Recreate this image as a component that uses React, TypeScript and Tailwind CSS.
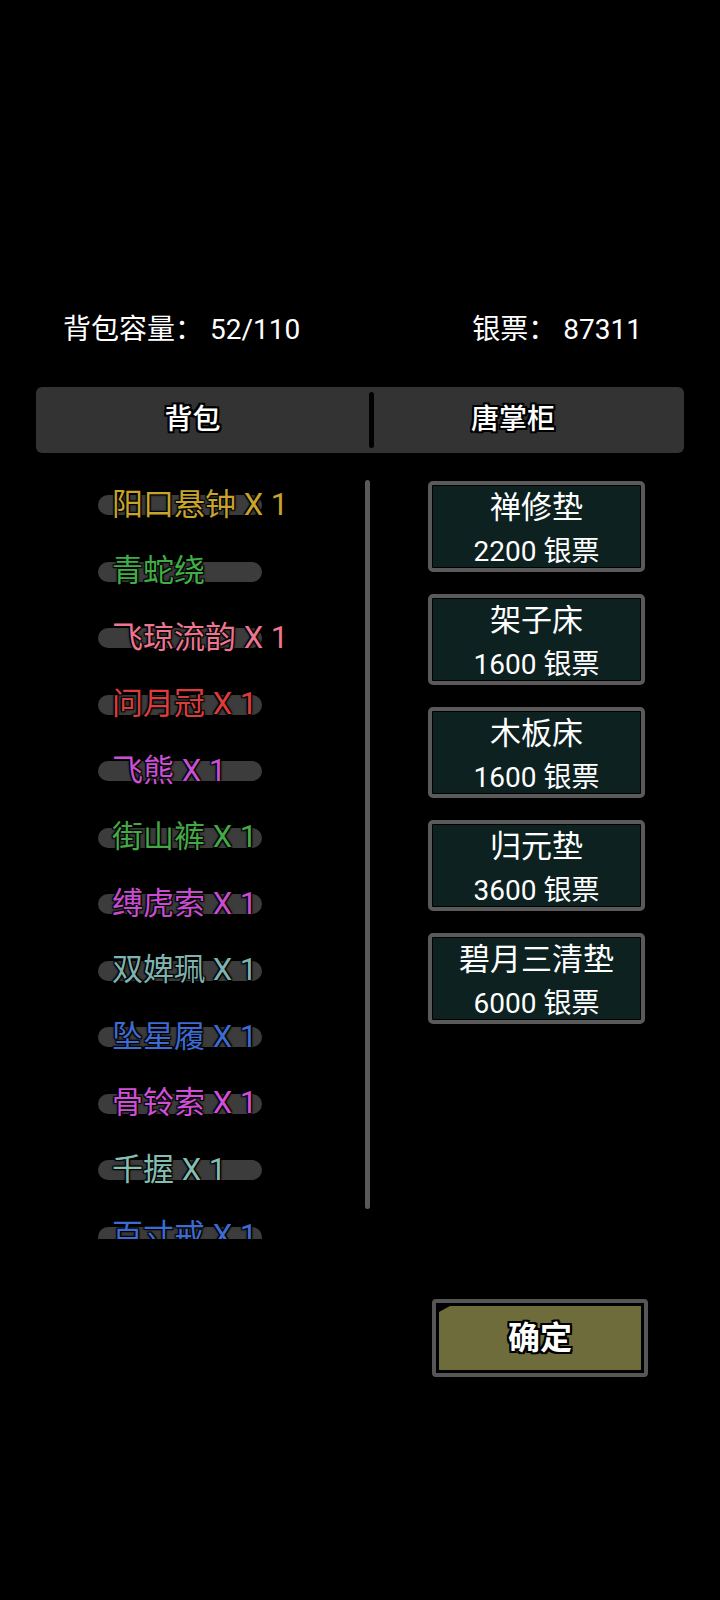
import React from "react";

const outline =
  "[text-shadow:-1px_-1px_1px_#000,1px_-1px_1px_#000,-1px_1px_1px_#000,1px_1px_1px_#000,0_0_3px_#000]";
const thickOutline =
  "[text-shadow:-2px_-2px_0_#000,2px_-2px_0_#000,-2px_2px_0_#000,2px_2px_0_#000,0_2px_0_#000,0_-2px_0_#000,2px_0_0_#000,-2px_0_0_#000]";

const items = [
  { name: "阳口悬钟 X 1", color: "text-[#c8a42c]" },
  { name: "青蛇绕", color: "text-[#3fae44]" },
  { name: "飞琼流韵 X 1", color: "text-[#ee7590]" },
  { name: "问月冠 X 1", color: "text-[#dd3c3c]" },
  { name: "飞熊 X 1", color: "text-[#c94fd6]" },
  { name: "街山裤 X 1", color: "text-[#45a846]" },
  { name: "缚虎索 X 1", color: "text-[#c84ccf]" },
  { name: "双婢珮 X 1", color: "text-[#7fb3b0]" },
  { name: "坠星履 X 1", color: "text-[#3d6bd1]" },
  { name: "骨铃索 X 1", color: "text-[#d14fd8]" },
  { name: "千握 X 1", color: "text-[#84bdb2]" },
  { name: "百寸戒 X 1", color: "text-[#3d6bd1]" },
];

const goods = [
  { name: "禅修垫", price: 2200 },
  { name: "架子床", price: 1600 },
  { name: "木板床", price: 1600 },
  { name: "归元垫", price: 3600 },
  { name: "碧月三清垫", price: 6000 },
];

const App: React.FC = () => {
  return (
    <div className="w-[720px] h-[1600px] bg-black text-white font-['Roboto','Noto_Sans_CJK_SC',sans-serif] overflow-hidden">
      {/* Header */}
      <div className="pt-[310px] pl-[63px] pr-[78px] flex justify-between text-[28px] leading-[40px]">
        <span>背包容量： 52/110</span>
        <span>银票： 87311</span>
      </div>

      {/* Tabs */}
      <div className="mt-[37px] mx-[36px] h-[66px] rounded-md bg-[#333333] flex items-center">
        <div className={`w-[333px] pr-[20px] text-center text-[28px] font-medium ${thickOutline}`}>
          背包
        </div>
        <div className="w-[5px] h-[56px] rounded-full bg-black" />
        <div className={`flex-1 pr-[32px] text-center text-[28px] font-medium ${thickOutline}`}>
          唐掌柜
        </div>
      </div>

      {/* Content */}
      <div className="mt-[19px] flex items-start">
        {/* Bag list */}
        <div className="ml-[98px] w-[267px] h-[767px] overflow-hidden">
          {items.map((item) => (
            <div key={item.name} className="relative h-[66.5px] flex items-center">
              <div className="absolute left-0 top-[23px] w-[164px] h-[20px] rounded-full bg-[#3c3c3c]" />
              <span
                className={`relative pl-[14px] mb-[2px] text-[31px] leading-none whitespace-nowrap ${item.color} ${outline}`}
              >
                {item.name}
              </span>
            </div>
          ))}
        </div>

        {/* Scrollbar */}
        <div className="mt-[8px] w-[5px] h-[729px] rounded-full bg-[#595959]" />

        {/* Shop */}
        <div className="ml-[58px] mt-[9px] w-[217px] flex flex-col gap-[22px]">
          {goods.map((g) => (
            <div
              key={g.name}
              className="h-[91px] border-4 border-[#5a5a5a] rounded-[5px] bg-black p-px"
            >
              <div className="h-full bg-[#0d2121] flex flex-col items-center">
                <div className="text-[31px] leading-[44px] whitespace-nowrap">{g.name}</div>
                <div className="text-[28px] leading-[44px] whitespace-nowrap">{g.price} 银票</div>
              </div>
            </div>
          ))}
        </div>
      </div>

      {/* Confirm */}
      <div className="mt-[60px] ml-[432px] w-[216px] h-[78px] border-4 border-[#565656] rounded-[4px] bg-black p-[3px]">
        <div className="h-full bg-[#6e6c3a] [clip-path:polygon(11px_0,100%_0,100%_100%,0_100%,0_6px)] flex items-center justify-center">
          <span className={`text-[32px] font-bold leading-none ${thickOutline}`}>确定</span>
        </div>
      </div>
    </div>
  );
};

export default App;
